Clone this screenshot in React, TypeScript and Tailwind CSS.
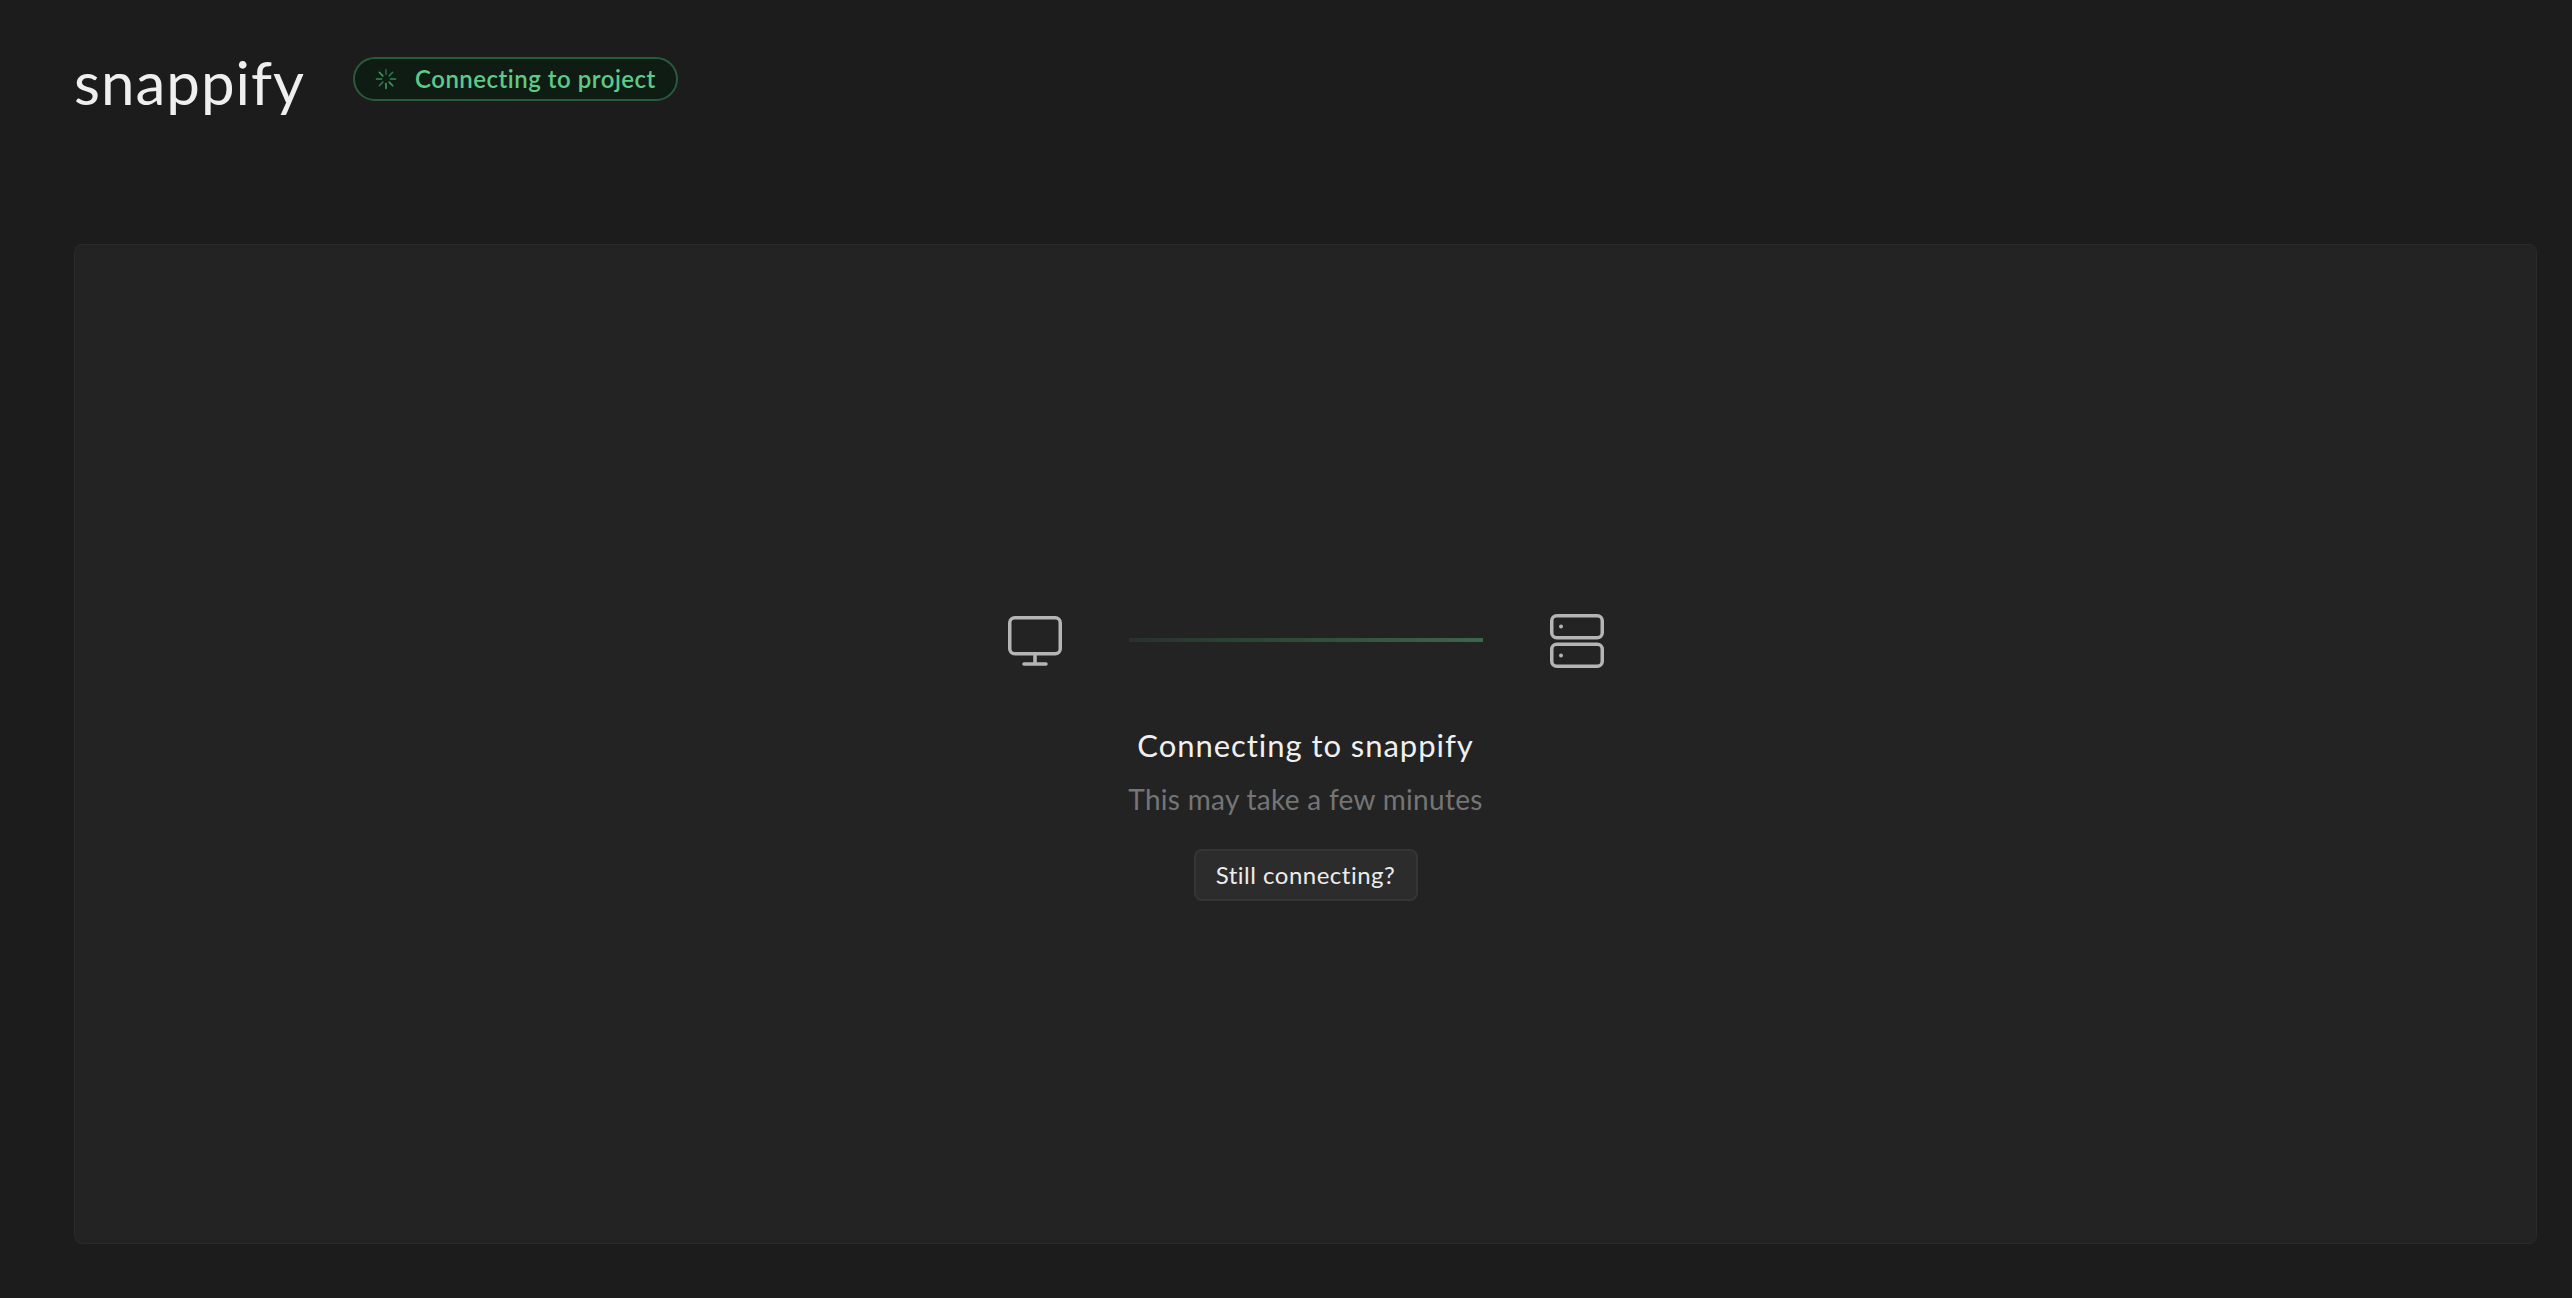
const font = { fontFamily: '"Lato", "Liberation Sans", sans-serif' };

function Spinner() {
  const lines = [0, 45, 90, 135, 180, 225, 270, 315];
  return (
    <svg width="22" height="22" viewBox="0 0 22 22" className="shrink-0" fill="none" stroke="#3f9a63" strokeWidth="1.6" strokeLinecap="round">
      {lines.map((a, i) => (
        <line key={a} x1="11" y1="1.5" x2="11" y2="6.5" transform={`rotate(${a} 11 11)`} opacity={i === 4 ? 1 : 0.55 + (i % 4) * 0.15} />
      ))}
    </svg>
  );
}

function Monitor() {
  return (
    <svg width="54" height="50" viewBox="0 0 54 50" fill="none" stroke="#b5b5b5" strokeWidth="3.5" strokeLinecap="round" strokeLinejoin="round" className="shrink-0">
      <rect x="1.75" y="1.75" width="50.5" height="36" rx="5" />
      <path d="M27 38v9M16 48h22" />
    </svg>
  );
}

function Server() {
  return (
    <svg width="54" height="54" viewBox="0 0 54 54" fill="none" stroke="#b5b5b5" strokeWidth="3.5" strokeLinecap="round" strokeLinejoin="round" className="shrink-0">
      <rect x="1.75" y="1.75" width="50.5" height="22" rx="5" />
      <rect x="1.75" y="30.25" width="50.5" height="22" rx="5" />
      <circle cx="11" cy="12.5" r="2" fill="#b5b5b5" stroke="none" />
      <circle cx="11" cy="41.5" r="2" fill="#b5b5b5" stroke="none" />
    </svg>
  );
}

export default function App() {
  return (
    <div style={font} className="flex h-[1298px] w-full flex-col bg-[#1c1c1c] pb-[54px] pl-[74px] pr-[35px] [font-variant-ligatures:none]">
      <header className="flex h-[244px] shrink-0 items-start pt-[47px]">
        <div className="w-[232px] text-[60px] leading-[70px] tracking-[1px] text-[#efefef]">snappify</div>
        <div className="ml-[47px] mt-[10px] flex h-[44px] w-[325px] items-center gap-[18px] rounded-full border-2 border-[#2a5a3c] bg-[#0f1c13] pl-[20px]">
          <Spinner />
          <span className="text-[24px] font-semibold leading-none tracking-[0.5px] text-[#5fc987]">Connecting to project</span>
        </div>
      </header>
      <main className="flex min-h-0 flex-1 flex-col items-center justify-center rounded-lg border border-[#2a2a2a] bg-[#232323] pt-[26px]">
        <div className="flex items-center">
          <Monitor />
          <div className="mx-[67px] mb-[2px] h-[4px] w-[354px] bg-gradient-to-r from-[#26332b] to-[#3c664b]" />
          <Server />
        </div>
        <h1 className="mt-[57px] text-[31px] font-normal leading-[40px] tracking-[0.95px] text-[#f0f0f0]">Connecting to snappify</h1>
        <p className="mt-[14px] text-[28px] leading-[40px] tracking-[0.3px] text-[#757575]">This may take a few minutes</p>
        <button className="mt-[30px] flex h-[52px] w-[224px] items-center justify-center rounded-lg border-2 border-[#353535] bg-[#2c2c2c] text-[24px] leading-none tracking-[0.5px] text-[#ececec]">Still connecting?</button>
      </main>
    </div>
  );
}
